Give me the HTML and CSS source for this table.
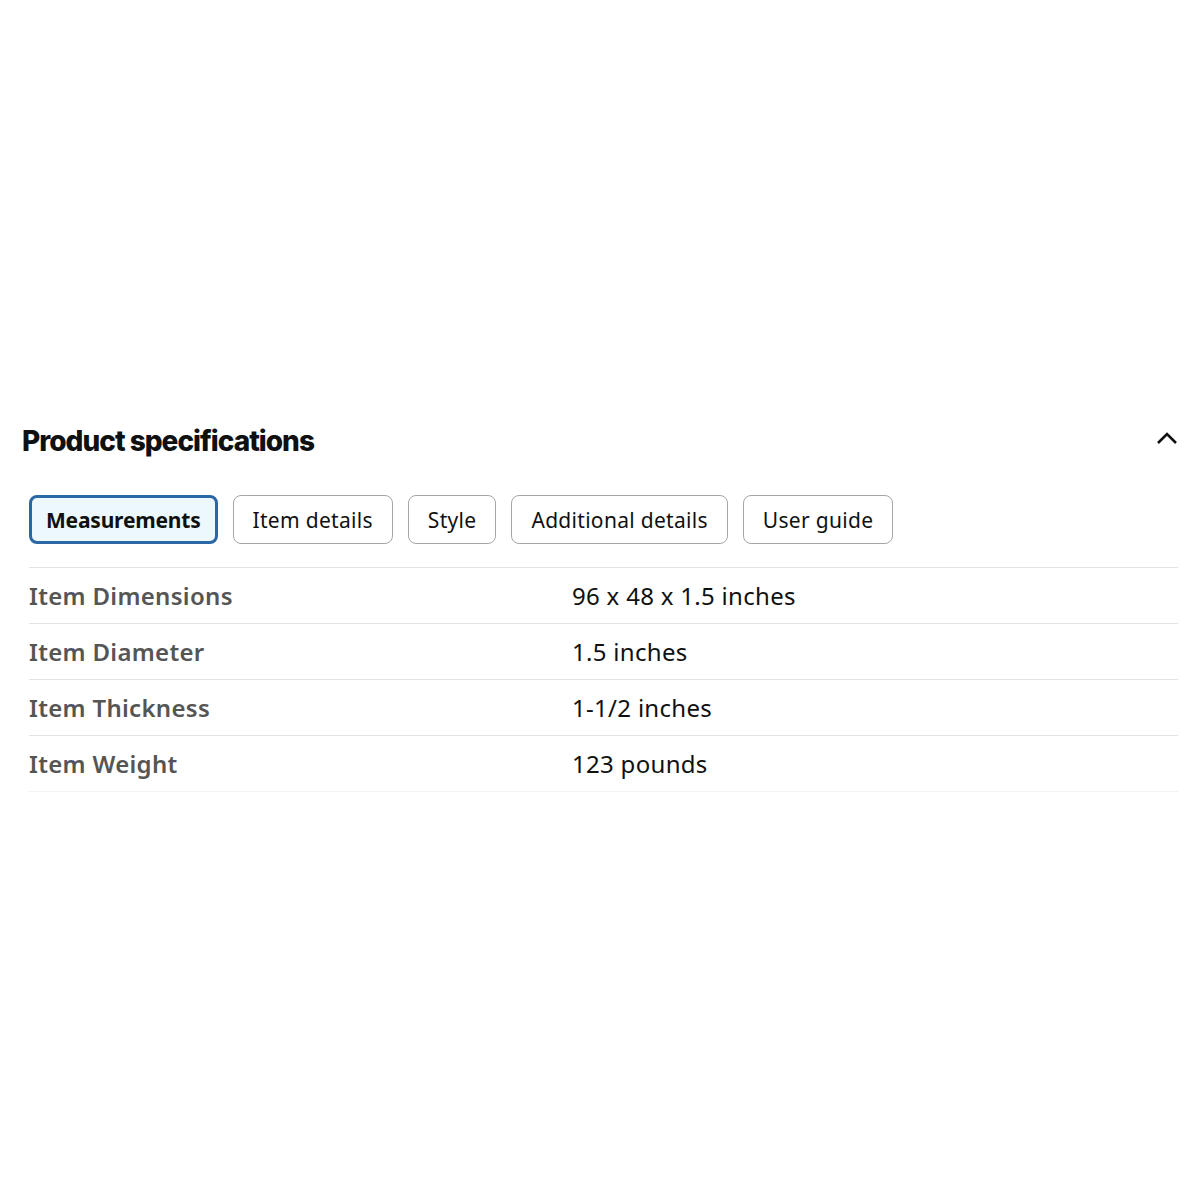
FILE: index.html
```html
<!DOCTYPE html>
<html lang="en">

<head>
    <meta charset="UTF-8">
    <meta name="viewport" content="width=device-width, initial-scale=1.0">
    <title>Product specifications</title>
    <link rel="stylesheet" href="styles.css">
</head>

<body>
    <div class="container">
        <div class="section-header">
            <h2>Product specifications</h2>
            <button class="collapse-btn" aria-label="Collapse">
                <svg width="22" height="14" viewBox="0 0 22 14">
                    <path d="M2 12 L11 3 L20 12" fill="none" stroke="#0f1111" stroke-width="2.6" />
                </svg>
            </button>
        </div>

        <div class="tabs">
            <button class="tab active">Measurements</button>
            <button class="tab">Item details</button>
            <button class="tab">Style</button>
            <button class="tab">Additional details</button>
            <button class="tab">User guide</button>
        </div>

        <table class="spec-table">
            <tr>
                <th>Item Dimensions</th>
                <td>96 x 48 x 1.5 inches</td>
            </tr>
            <tr>
                <th>Item Diameter</th>
                <td>1.5 inches</td>
            </tr>
            <tr>
                <th>Item Thickness</th>
                <td>1-1/2 inches</td>
            </tr>
            <tr>
                <th>Item Weight</th>
                <td>123 pounds</td>
            </tr>
        </table>
    </div>
</body>

</html>
```

FILE: styles.css
```css
body {
    font-family: "Noto Sans", Arial, sans-serif;
    margin: 0;
    background: #fff;
    color: #0f1111;
}

.container {
    padding: 418px 22px 0 22px;
}

.section-header {
    display: flex;
    align-items: center;
    justify-content: space-between;
}

h2 {
    font-family: Inter, "Noto Sans", sans-serif;
    font-weight: 800;
    font-size: 28px;
    letter-spacing: -1px;
    margin: 0;
    line-height: 46px;
}

.collapse-btn {
    background: none;
    border: none;
    padding: 0;
    margin: 0 0 7px 0;
    cursor: pointer;
    display: flex;
}

.tabs {
    display: flex;
    gap: 15px;
    margin-top: 31px;
    padding-left: 7px;
}

.tab {
    font-family: "Noto Sans", Arial, sans-serif;
    font-size: 21px;
    letter-spacing: 0.3px;
    color: #0f1111;
    background: #fff;
    border: 1px solid #a6a6a6;
    border-radius: 8px;
    height: 49px;
    padding: 0 19px;
    cursor: pointer;
}

.tab.active {
    font-weight: bold;
    letter-spacing: -0.2px;
    border: 3px solid #2a67a5;
    background: #edf8fc;
    padding: 0 14px;
}

.spec-table {
    width: calc(100% - 7px);
    margin-left: 7px;
    margin-top: 23px;
    border-collapse: collapse;
}

.spec-table tr {
    border-top: 1.5px solid #e3e3e3;
    border-bottom: 1.5px solid #e3e3e3;
}

.spec-table tr:last-child {
    border-bottom: 1px solid #f3f3f3;
}

.spec-table th,
.spec-table td {
    font-size: 24px;
    letter-spacing: 0.3px;
    height: 55px;
    padding: 0;
    text-align: left;
    vertical-align: middle;
}

.spec-table th {
    width: 543px;
    font-weight: 600;
    color: #555;
}

.spec-table td {
    color: #0f1111;
}
```
